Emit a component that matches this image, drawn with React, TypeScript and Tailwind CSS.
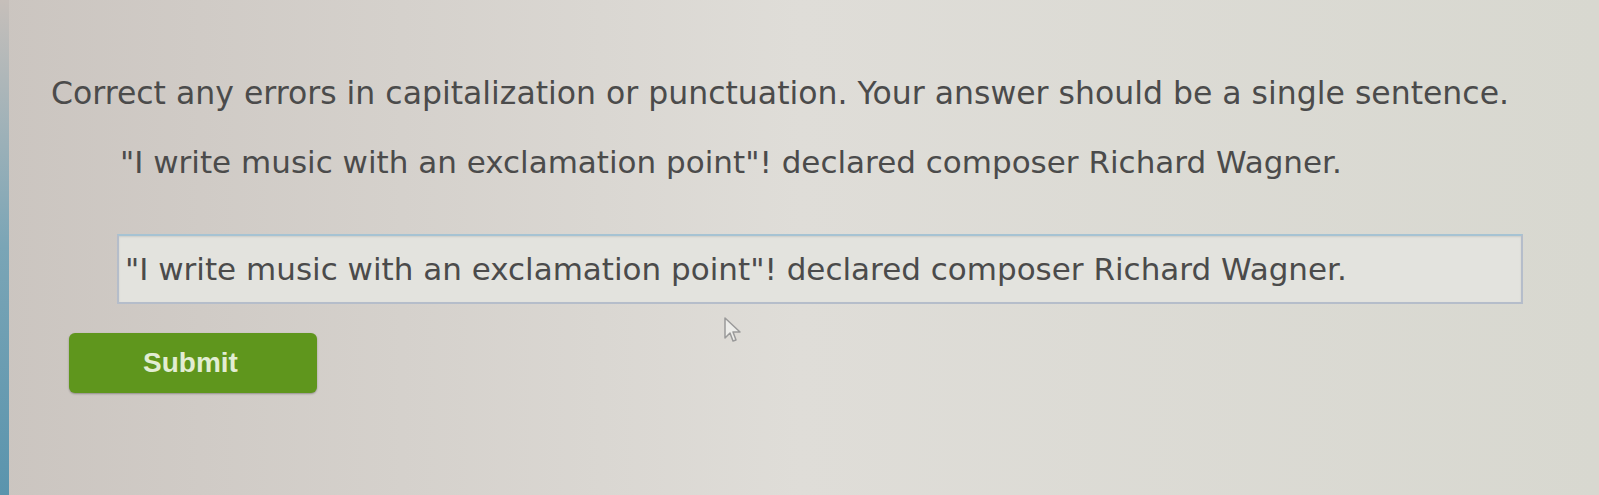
import React from "react";

const FONT = { fontFamily: '"DejaVu Sans", Verdana, sans-serif' };
const SENTENCE = '"I write music with an exclamation point"! declared composer Richard Wagner.';

export default function App() {
  return (
    <div className="flex h-[495px] w-[1599px] overflow-hidden bg-gradient-to-r from-[#cbc5c0] via-[#dfddd8] to-[#d8d8d0]">
      <div className="w-[9px] shrink-0 bg-gradient-to-b from-[#c6bfba] via-[#7aa5b6] to-[#5a94ad]" />
      <div className="flex flex-1 flex-col pt-[73px] text-[#4b4b4b]" style={FONT}>
        <p className="pl-[42px] text-[31.5px] leading-[40px]">
          Correct any errors in capitalization or punctuation. Your answer should be a single sentence.
        </p>

        <p className="mt-[29px] pl-[111px] text-[31px] leading-[40px]">{SENTENCE}</p>

        <div className="ml-[108px] mt-[52px] flex h-[70px] w-[1406px] items-center border-2 border-[#b5bdca] border-t-[#a6c3d3] bg-[#e3e3de] px-[6px] shadow-[inset_0_1px_2px_rgba(0,0,0,0.1)]">
          <span className="text-[31px] leading-[40px]">{SENTENCE}</span>
        </div>

        <div className="relative">
          <svg
            className="absolute left-[714px] top-[12px]"
            width="20"
            height="28"
            viewBox="0 0 20 28"
          >
            <path
              d="M2 2 L2 22 L7 17 L10 25 L13 24 L10 16 L17 16 Z"
              fill="#ededea"
              stroke="#9a9a9a"
              strokeWidth="1.5"
              strokeLinejoin="round"
            />
          </svg>
        </div>

        <button
          className="ml-[60px] mt-[29px] flex h-[60px] w-[248px] items-center rounded-[6px] bg-[#5f961d] pl-[74px] text-[28px] font-bold text-[#e2edd3] shadow-[0_1px_2px_rgba(0,0,0,0.3)]"
          style={{ fontFamily: '"Liberation Sans", Arial, sans-serif' }}
        >
          Submit
        </button>
      </div>
    </div>
  );
}
